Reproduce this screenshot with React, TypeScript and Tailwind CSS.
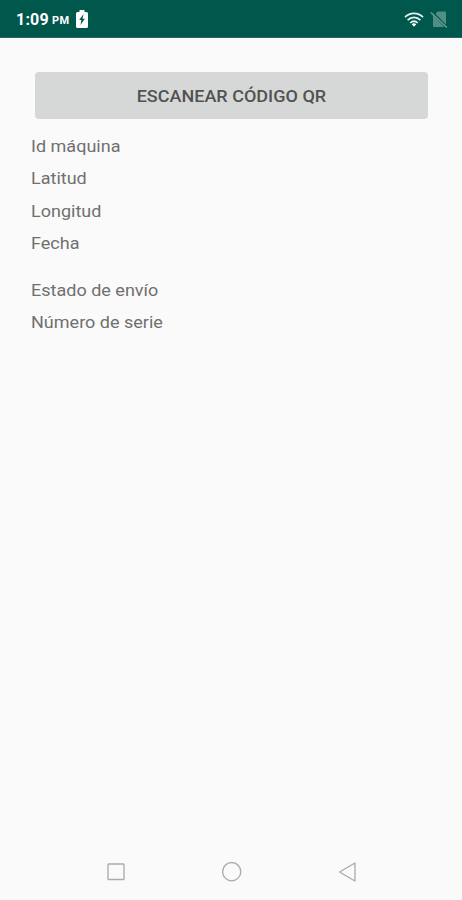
const fields = ["Id máquina", "Latitud", "Longitud", "Fecha"];
const details = ["Estado de envío", "Número de serie"];

function StatusBar() {
  return (
    <header className="flex h-[38px] items-center justify-between border-b border-[#27685e] bg-[#00574b] pr-[14px] pl-4 text-white">
      <div className="flex items-center pt-px">
        <span className="w-[33px] pt-px text-[16px] leading-5 font-bold tracking-[0.2px]">1:09</span>
        <span className="ml-[3px] w-[18px] pt-[4px] text-[11px] leading-4 font-bold tracking-[0.300px]">PM</span>
        <svg className="ml-[6px]" width="12" height="18" viewBox="0 0 12 18">
          <path d="M3.500 0h5v2h2q1.500 0 1.500 1.500v13q0 1.500-1.500 1.500h-9q-1.500 0-1.500-1.500v-13q0-1.500 1.500-1.500h2z" fill="#fff" />
          <path d="M7.500 4 3.200 10h2.200L4.500 15 8.800 8.800H6.500z" fill="#00574b" />
        </svg>
      </div>
      <div className="flex items-center gap-[6px] pt-px">
        <svg width="20" height="15" viewBox="0 0 20 15" fill="none" stroke="#e3f3ef" strokeWidth="1.700">
          <path d="M1 5.200C6 .2 14 .2 19 5.200M3.600 8.200c3.700-3.700 9.100-3.700 12.800 0M6.300 11c2.200-2.100 5.200-2.100 7.400 0" />
          <path d="M7.700 12.200q2.300-1.700 4.600 0L10 14.700z" fill="#fff" stroke="none" />
        </svg>
        <svg width="18" height="17" viewBox="0 0 18 17">
          <path d="M7.500 .5h7.500q1 0 1 1v12L5.500 3zM3 4.500 14.200 16H4q-1 0-1-1z" fill="#4f8f84" />
          <path d="m.8 1.500 16 15" stroke="#6ba298" strokeWidth="1.400" />
        </svg>
      </div>
    </header>
  );
}

function Labels({ items }: { items: string[] }) {
  return (
    <div className="origin-left scale-x-[1.06] text-[17px] leading-[32.300px] text-[#707070]">
      {items.map((item) => (
        <p key={item}>{item}</p>
      ))}
    </div>
  );
}

export default function App() {
  return (
    <div className="flex h-[900px] w-full flex-col overflow-hidden bg-[#fafafa] font-[Roboto,sans-serif]">
      <StatusBar />
      <main className="flex-1 pt-[34px] pr-[34px] pl-[31px]">
        <button className="ml-[4px] block h-[47px] w-[393px] rounded-[4px] bg-[#d6d8d7] text-[17px] leading-5 font-medium text-[#525252]">
          <span className="inline-block scale-x-[1.06]">ESCANEAR CÓDIGO QR</span>
        </button>
        <div className="mt-[11px] flex flex-col gap-[15px]">
          <Labels items={fields} />
          <Labels items={details} />
        </div>
      </main>
      <nav className="flex h-[56px] items-center justify-center gap-[96px] pl-[2px]">
        <svg width="20" height="20" viewBox="0 0 20 20" fill="none" stroke="#aaa" strokeWidth="1.300">
          <rect x="2" y="2" width="16" height="15.500" rx=".5" />
        </svg>
        <svg width="20" height="20" viewBox="0 0 20 20" fill="none" stroke="#aaa" strokeWidth="1.300">
          <circle cx="9.700" cy="9.700" r="9.100" />
        </svg>
        <svg width="20" height="20" viewBox="0 0 20 20" fill="none" stroke="#aaa" strokeWidth="1.300">
          <path d="M17 1v18L1.500 10z" strokeLinejoin="round" />
        </svg>
      </nav>
    </div>
  );
}
